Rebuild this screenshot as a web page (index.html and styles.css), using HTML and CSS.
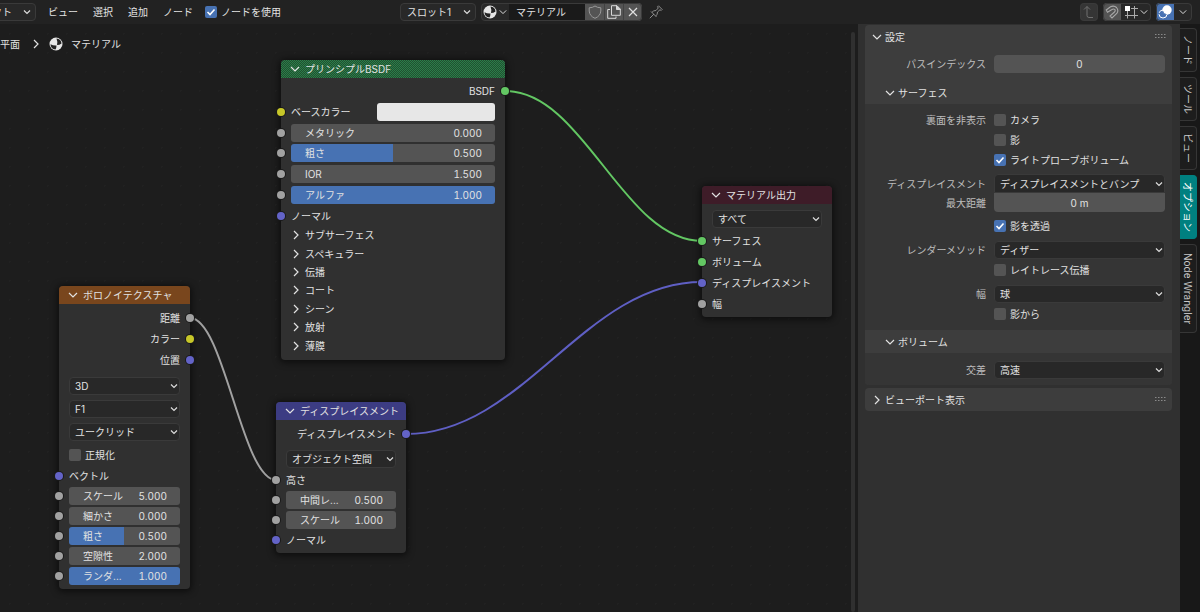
FILE: index.html
```
<!DOCTYPE html>
<html lang="ja">
<head>
    <meta charset="UTF-8">
    <meta name="viewport" content="width=device-width, initial-scale=1.0">
    <title>シェーダーエディター</title>
    <link rel="stylesheet" href="styles.css">
</head>
<body>

    <svg class="defs" aria-hidden="true">
        <symbol id="down" viewBox="0 0 10 10"><path d="M1 3l4 4 4-4" fill="none" stroke="currentColor" stroke-width="1.2"/></symbol>
        <symbol id="right" viewBox="0 0 10 10"><path d="M3 1l4 4-4 4" fill="none" stroke="currentColor" stroke-width="1.2"/></symbol>
        <symbol id="ball" viewBox="0 0 14 14">
            <circle cx="7" cy="7" r="6.5" fill="#e6e6e6"/>
            <path d="M7.500 1.500A5.500 5.500 0 0 1 12.500 6.500Q10.500 8 8 8Q8.800 4.500 7.500 1.500Z" fill="#222"/>
            <path d="M1.500 7.200Q4 8.600 7.500 8.400Q7.500 10.500 6.500 12.500A5.500 5.500 0 0 1 1.500 7.200Z" fill="#222"/>
        </symbol>
        <symbol id="grip" viewBox="0 0 11 5">
            <path d="M0 .5h11M0 3.500h11" stroke="#8a8a8a" stroke-width="1" stroke-dasharray="1.500 1.500"/>
        </symbol>
    </svg>

    <header class="topbar">
        <select class="drop mode" aria-label="シェーダータイプ"><option>オブジェクト</option></select>
        <nav class="menus">
            <button>ビュー</button>
            <button>選択</button>
            <button>追加</button>
            <button>ノード</button>
        </nav>
        <label class="check use-nodes"><input type="checkbox" checked>ノードを使用</label>

        <div class="slot-area">
            <select class="drop slot" aria-label="スロット"><option>スロット1</option></select>
            <div class="joined">
                <button class="browse" aria-label="マテリアルを閲覧"><svg width="14" height="14"><use href="#ball"/></svg><svg width="8" height="8"><use href="#down"/></svg></button>
                <input class="mat-name" type="text" value="マテリアル" aria-label="マテリアル名">
                <button class="lit" aria-label="フェイクユーザー">
                    <svg width="14" height="14" viewBox="0 0 14 14"><path d="M7 1Q9.500 2.800 12.800 2.800V6Q12.500 11 7 13.300Q1.500 11 1.200 6V2.800Q4.500 2.800 7 1Z" fill="none" stroke="#999"/></svg>
                </button>
                <button class="lit" aria-label="新規マテリアル">
                    <svg width="14" height="14" viewBox="0 0 14 14" fill="none" stroke="#d8d8d8"><path d="M3 4.500H.7V13.300H9V11.500"/><path d="M4.500.7H10L13.300 4V10.300H4.500Z"/><path d="M9.500.7V4.500H13.300Z" fill="#d8d8d8"/></svg>
                </button>
                <button class="lit" aria-label="リンク解除">
                    <svg width="10" height="10" viewBox="0 0 10 10" stroke="#e0e0e0" stroke-width="1.200"><path d="M1 1l8 8M9 1l-8 8"/></svg>
                </button>
            </div>
            <button class="pin" aria-label="ピン">
                <svg width="14" height="14" viewBox="0 0 14 14" fill="none" stroke="#8c8c8c"><path d="M.8 13.200L5 9M2 6.500L7.500 12M3 7.300Q4.500 5.300 7 5.500L9.300 3L8.500 1.800L9.500.8L13.200 4.500L12.200 5.500L11 4.700L8.500 7Q8.700 9.500 6.700 11"/></svg>
            </button>
        </div>

        <div class="right-tools">
            <div class="joined">
                <button class="dim" aria-label="親ノードツリー">
                    <svg width="14" height="14" viewBox="0 0 14 14" fill="none" stroke="#707070"><path d="M2 4.500L5 1.500L8 4.500M5 1.500V10.500Q5 12.500 7 12.500H11"/></svg>
                </button>
            </div>
            <div class="joined">
                <button class="lit" aria-label="スナップ">
                    <svg width="14" height="14" viewBox="0 0 14 14" fill="none" stroke="#a8a8a8" stroke-width="1.100"><path d="M1.200 5L5.500 1.800Q9 .2 11.500 2.500Q14 5.500 11.800 8.500L7 13L5 11L9.500 7Q10.800 5.500 9.700 4.400Q8.500 3.500 7 4.500L2.500 7.200Z"/></svg>
                </button>
                <button class="wide" aria-label="スナップ先">
                    <svg width="14" height="14" viewBox="0 0 14 14"><path d="M3.500 6V13.500M10.500 1V13.500M7 3.500H14M1 10.500H14" stroke="#aaa" fill="none"/><path d="M1 1h5v5H1z" fill="#fff"/></svg>
                    <svg width="8" height="8"><use href="#down"/></svg>
                </button>
            </div>
            <div class="joined">
                <button class="on" aria-label="オーバーレイ">
                    <svg width="14" height="14" viewBox="0 0 14 14"><circle cx="9" cy="5" r="4.700" fill="#fff"/><circle cx="5" cy="9" r="4" fill="none" stroke="#fff" stroke-dasharray="12 1.500"/><path d="M4.700 6Q5 9.500 8.500 9.500" fill="none" stroke="#4772b3"/></svg>
                </button>
                <button aria-label="オーバーレイ設定"><svg width="8" height="8"><use href="#down"/></svg></button>
            </div>
        </div>
    </header>

    <main class="editor">
        <section class="canvas">
            <div class="crumbs">
                <span>平面</span>
                <svg width="10" height="10"><use href="#right"/></svg>
                <svg width="14" height="14"><use href="#ball"/></svg>
                <span>マテリアル</span>
            </div>

            <svg class="wires" aria-hidden="true">
                <path class="w-green" d="M505 67C584 67 623 217 702 217"/>
                <path class="w-blue" d="M406 410C524 410 584 258 702 258"/>
                <path class="w-gray" d="M190 294C224 294 242 456 276 456"/>
            </svg>

            <article class="node principled">
                <h2 class="green"><svg width="10" height="10"><use href="#down"/></svg>プリンシプルBSDF</h2>
                <div class="inputs">
                    <div class="row out s-green">BSDF</div>
                    <div class="row in s-yellow"><label for="base">ベースカラー</label><button class="swatch" id="base" aria-label="ベースカラー"></button></div>
                    <div class="row in s-gray"><label class="field">メタリック<input value="0.000"></label></div>
                    <div class="row in s-gray"><label class="field fill" style="--fill: 50%">粗さ<input value="0.500"></label></div>
                    <div class="row in s-gray"><label class="field">IOR<input value="1.500"></label></div>
                    <div class="row in s-gray"><label class="field fill" style="--fill: 100%">アルファ<input value="1.000"></label></div>
                    <div class="row in s-blue">ノーマル</div>
                </div>
                <ul class="subs">
                    <li><svg width="10" height="10"><use href="#right"/></svg>サブサーフェス</li>
                    <li><svg width="10" height="10"><use href="#right"/></svg>スペキュラー</li>
                    <li><svg width="10" height="10"><use href="#right"/></svg>伝播</li>
                    <li><svg width="10" height="10"><use href="#right"/></svg>コート</li>
                    <li><svg width="10" height="10"><use href="#right"/></svg>シーン</li>
                    <li><svg width="10" height="10"><use href="#right"/></svg>放射</li>
                    <li><svg width="10" height="10"><use href="#right"/></svg>薄膜</li>
                </ul>
            </article>

            <article class="node output">
                <h2 class="red"><svg width="10" height="10"><use href="#down"/></svg>マテリアル出力</h2>
                <div class="row pick"><select class="drop" aria-label="ターゲット"><option>すべて</option></select></div>
                <div class="row in s-green">サーフェス</div>
                <div class="row in s-green">ボリューム</div>
                <div class="row in s-blue">ディスプレイスメント</div>
                <div class="row in s-gray">幅</div>
            </article>

            <article class="node voronoi">
                <h2 class="orange"><svg width="10" height="10"><use href="#down"/></svg>ボロノイテクスチャ</h2>
                <div class="outs">
                    <div class="row out s-gray">距離</div>
                    <div class="row out s-yellow">カラー</div>
                    <div class="row out s-blue">位置</div>
                </div>
                <div class="row pick"><select class="drop" aria-label="次元"><option>3D</option></select></div>
                <div class="row pick"><select class="drop" aria-label="特徴出力"><option>F1</option></select></div>
                <div class="row pick"><select class="drop" aria-label="距離計算"><option>ユークリッド</option></select></div>
                <div class="row pick"><label class="check"><input type="checkbox">正規化</label></div>
                <div class="row in s-blue">ベクトル</div>
                <div class="row in s-gray"><label class="field">スケール<input value="5.000"></label></div>
                <div class="row in s-gray"><label class="field">細かさ<input value="0.000"></label></div>
                <div class="row in s-gray"><label class="field fill" style="--fill: 50%">粗さ<input value="0.500"></label></div>
                <div class="row in s-gray"><label class="field">空隙性<input value="2.000"></label></div>
                <div class="row in s-gray"><label class="field fill" style="--fill: 100%">ランダ...<input value="1.000"></label></div>
            </article>

            <article class="node displace">
                <h2 class="blue"><svg width="10" height="10"><use href="#down"/></svg>ディスプレイスメント</h2>
                <div class="outs">
                    <div class="row out s-blue">ディスプレイスメント</div>
                </div>
                <div class="row pick"><select class="drop" aria-label="空間"><option>オブジェクト空間</option></select></div>
                <div class="row in s-gray">高さ</div>
                <div class="row in s-gray"><label class="field">中間レ...<input value="0.500"></label></div>
                <div class="row in s-gray"><label class="field">スケール<input value="1.000"></label></div>
                <div class="row in s-blue">ノーマル</div>
            </article>

            <div class="scrollbar"></div>
        </section>

        <aside class="sidebar">
            <section class="panel">
                <h3><svg width="10" height="10"><use href="#down"/></svg>設定<svg class="grip" width="11" height="5"><use href="#grip"/></svg></h3>
                <div class="prop pass"><label for="pass">パスインデックス</label><input class="num" id="pass" value="0"></div>
                <h4><svg width="10" height="10"><use href="#down"/></svg>サーフェス</h4>
                <div class="body">
                    <div class="group">
                        <div class="prop"><span>裏面を非表示</span><label class="check"><input type="checkbox">カメラ</label></div>
                        <div class="prop"><label class="check"><input type="checkbox">影</label></div>
                        <div class="prop"><label class="check"><input type="checkbox" checked>ライトプローブボリューム</label></div>
                    </div>
                    <div class="group stack">
                        <div class="prop"><label for="disp">ディスプレイスメント</label><select class="drop" id="disp"><option>ディスプレイスメントとバンプ</option></select></div>
                        <div class="prop"><label for="dist">最大距離</label><input class="num" id="dist" value="0 m"></div>
                    </div>
                    <div class="group">
                        <div class="prop"><label class="check"><input type="checkbox" checked>影を透過</label></div>
                    </div>
                    <div class="group">
                        <div class="prop"><label for="method">レンダーメソッド</label><select class="drop" id="method"><option>ディザー</option></select></div>
                        <div class="prop"><label class="check"><input type="checkbox">レイトレース伝播</label></div>
                    </div>
                    <div class="group">
                        <div class="prop"><label for="thick">幅</label><select class="drop" id="thick"><option>球</option></select></div>
                        <div class="prop"><label class="check"><input type="checkbox">影から</label></div>
                    </div>
                </div>
                <h4><svg width="10" height="10"><use href="#down"/></svg>ボリューム</h4>
                <div class="body">
                    <div class="prop"><label for="cross">交差</label><select class="drop" id="cross"><option>高速</option></select></div>
                </div>
            </section>
            <section class="panel">
                <h3><svg width="10" height="10"><use href="#right"/></svg>ビューポート表示<svg class="grip" width="11" height="5"><use href="#grip"/></svg></h3>
            </section>
        </aside>

        <nav class="tabs">
            <button>ノード</button>
            <button>ツール</button>
            <button>ビュー</button>
            <button class="active">オプション</button>
            <button class="addon">Node Wrangler</button>
        </nav>
    </main>

</body>
</html>
```
FILE: styles.css
```
* {
    box-sizing: border-box;
}

body {
    margin: 0;
    height: 100vh;
    display: flex;
    flex-direction: column;
    overflow: hidden;
    background: #1d1d1d;
    color: #e2e2e2;
    font-family: Inter, "Noto Sans CJK JP", sans-serif;
    font-size: 10px;
    line-height: 16px;
}

button, input, select {
    font: inherit;
    color: inherit;
    margin: 0;
    padding: 0;
    border: none;
    background: none;
}

svg {
    flex: none;
    display: block;
}

h2, h3, h4, ul {
    margin: 0;
    padding: 0;
    font-size: 10px;
    font-weight: 400;
    list-style: none;
}

.defs {
    position: absolute;
    width: 0;
    height: 0;
}

/* shared controls */
.drop {
    appearance: none;
    width: 100%;
    height: 18px;
    padding: 0 16px 0 5px;
    border: 1px solid #3a3a3a;
    border-radius: 4px;
    background: #282828 url("data:image/svg+xml,%3Csvg xmlns='http://www.w3.org/2000/svg' width='8' height='8' viewBox='0 0 8 8'%3E%3Cpath d='M1 2.500l3 3 3-3' fill='none' stroke='%23ddd' stroke-width='1.200'/%3E%3C/svg%3E") no-repeat right 1px center;
}

.check {
    display: flex;
    align-items: center;
    gap: 4px;
    white-space: nowrap;
}

.check input {
    appearance: none;
    width: 12px;
    height: 12px;
    border-radius: 2px;
    background: #545454;
}

.check input:checked {
    background: #4772b3 url("data:image/svg+xml,%3Csvg xmlns='http://www.w3.org/2000/svg' width='12' height='12' viewBox='0 0 12 12'%3E%3Cpath d='M2.500 6l2.500 2.500 4.500-5' fill='none' stroke='white' stroke-width='1.600'/%3E%3C/svg%3E") center no-repeat;
}

.field {
    flex: 1;
    min-width: 0;
    height: 18px;
    padding: 0 13px 0 14px;
    border-radius: 3px;
    background: #545454;
    display: flex;
    align-items: center;
    white-space: nowrap;
}

.field.fill {
    background: linear-gradient(to right, #4772b3 var(--fill), #545454 var(--fill));
}

.field input {
    flex: 1;
    width: 0;
    font-variant-numeric: tabular-nums;
    text-align: right;
}

.num {
    width: 100%;
    height: 18px;
    border-radius: 4px;
    background: #545454;
    text-align: center;
}

/* header */
.topbar {
    flex: none;
    height: 24px;
    padding-right: 8px;
    background: #222;
    display: flex;
    align-items: center;
    position: relative;
}

.topbar .drop {
    background-color: #282828;
    background-position: right 4px center;
}

.topbar .mode {
    flex: none;
    width: 92px;
    margin-left: -56px;
    padding-left: 7px;
}

.menus {
    display: flex;
    gap: 15px;
    margin-left: 12px;
}

.use-nodes {
    margin-left: 12px;
}

.slot-area {
    display: flex;
    align-items: center;
    gap: 5px;
    margin-left: 119px;
}

.topbar .slot {
    width: 76px;
    padding-left: 6px;
}

.joined {
    display: flex;
    height: 18px;
    border-radius: 4px;
    overflow: hidden;
    background: #282828;
    outline: 1px solid #3a3a3a;
    outline-offset: -1px;
}

.joined button {
    width: 19px;
    display: flex;
    align-items: center;
    justify-content: center;
}

.joined .browse {
    width: 28px;
    gap: 2px;
}

.right-tools .joined button {
    width: 18px;
}

.right-tools .joined .wide {
    width: 30px;
    gap: 2px;
}

.joined .lit {
    background: #545454;
}

.joined .lit + .lit {
    border-left: 1px solid #424242;
}

.joined .dim {
    background: #353535;
}

.joined .on {
    background: #4772b3;
}

.mat-name {
    width: 76px;
    padding-left: 7px;
    background: #1a1a1a;
}

.pin {
    margin-left: 2px;
}

.right-tools {
    display: flex;
    gap: 5px;
    margin-left: auto;
}

/* node canvas */
.editor {
    flex: 1;
    min-height: 0;
    display: flex;
}

.canvas {
    flex: 1;
    min-width: 0;
    position: relative;
    overflow: hidden;
    background: #1d1d1d radial-gradient(circle, #212121 1px, transparent 1px) 0 0 / 19px 19px;
}

.crumbs {
    display: flex;
    align-items: center;
    margin-top: 12px;
    gap: 8px;
}

.crumbs svg:first-of-type {
    margin-left: 3px;
}

.wires {
    position: absolute;
    left: 0;
    top: 0;
    width: 100%;
    height: 100%;
    fill: none;
    stroke-width: 2;
}

.w-green {
    stroke: #63c763;
}

.w-blue {
    stroke: #5f5fc4;
}

.w-gray {
    stroke: #a1a1a1;
}

.node {
    position: absolute;
    width: 130px;
    padding-bottom: 3px;
    border-radius: 4px;
    background: #303030;
    box-shadow: 0 1px 6px 2px rgba(0, 0, 0, 0.5);
}

.principled {
    left: 281px;
    top: 36px;
    width: 224px;
    padding-bottom: 5px;
}

.output {
    left: 702px;
    top: 162px;
}

.voronoi {
    left: 59px;
    top: 262px;
    width: 131px;
}

.displace {
    left: 276px;
    top: 378px;
}

.node h2 {
    height: 18px;
    padding-left: 9px;
    border-radius: 4px 4px 0 0;
    display: flex;
    align-items: center;
    gap: 5px;
    white-space: nowrap;
}

.green {
    background: repeating-conic-gradient(#2b7d4a 0 25%, #215030 0 50%) 0 0 / 2px 2px;
}

.red {
    background: #3e1c28;
}

.orange {
    background: #79461d;
}

.blue {
    background: #3c3c83;
}

.row {
    position: relative;
    height: 20px;
    padding: 0 10px;
    display: flex;
    align-items: center;
}

.outs {
    padding-top: 3px;
}

.output .row,
.outs .row {
    height: 21px;
}

.node .pick {
    height: 23px;
}

.output .pick,
.outs + .pick {
    margin-top: 3px;
}

.voronoi .outs {
    padding-bottom: 1px;
}

.out {
    justify-content: flex-end;
}

/* sockets sit on the node's edge */
.in::before,
.out::after {
    content: "";
    position: absolute;
    top: 50%;
    width: 8px;
    height: 8px;
    margin-top: -4px;
    border-radius: 50%;
    background: var(--socket);
    box-shadow: 0 0 0 1px #1a1a1a;
}

.in::before {
    left: -4px;
}

.out::after {
    right: -4px;
}

.s-green {
    --socket: #63c763;
}

.s-yellow {
    --socket: #c7c729;
}

.s-gray {
    --socket: #a1a1a1;
}

.s-blue {
    --socket: #6363c7;
}

.inputs {
    height: 148px;
    padding-top: 3px;
    display: grid;
    grid-auto-rows: 1fr;
}

.principled .row {
    height: auto;
}

.swatch {
    width: 118px;
    height: 18px;
    margin-left: auto;
    border-radius: 3px;
    background: #e7e7e7;
}

.subs {
    height: 129px;
    padding-left: 10px;
    display: grid;
    grid-auto-rows: 1fr;
}

.subs li {
    display: flex;
    align-items: center;
    gap: 4px;
}

.scrollbar {
    position: absolute;
    right: 3px;
    top: 8px;
    bottom: 0;
    width: 4px;
    border-radius: 2px;
    background: #303030;
}

/* sidebar */
.sidebar {
    flex: none;
    width: 322px;
    padding: 1px 8px 0 7px;
    background: #303030;
    display: flex;
    flex-direction: column;
    gap: 3px;
}

.panel {
    border-radius: 4px;
    overflow: hidden;
    background: #3d3d3d;
}

.panel h3,
.panel h4 {
    height: 23px;
    padding: 0 6px 0 7px;
    display: flex;
    align-items: center;
    gap: 3px;
}

.panel h4 {
    padding-left: 20px;
}

.grip {
    margin-left: auto;
}

.prop {
    height: 20px;
    padding-right: 7px;
    display: grid;
    grid-template-columns: 1fr 171px;
    column-gap: 8px;
    align-items: center;
}

.prop > :first-child:not(.check) {
    text-align: right;
    color: #bdbdbd;
}

.prop > .check {
    grid-column: 2;
}

.pass {
    margin: 6px 0 7px;
}

.body {
    padding: 6px 0;
    background: #353535;
    display: flex;
    flex-direction: column;
    gap: 4px;
}

.body:last-child {
    padding: 7px 0 5px;
}

.stack .prop {
    height: 19px;
}

.stack .drop,
.stack .num {
    height: 19px;
}

.stack .drop {
    border-radius: 4px 4px 0 0;
}

.stack .num {
    border-radius: 0 0 4px 4px;
}

/* region tabs */
.tabs {
    flex: none;
    width: 20px;
    padding: 4px 3px 0 0;
    background: #181818;
    display: flex;
    flex-direction: column;
    gap: 5px;
}

.tabs button {
    width: 17px;
    padding: 6px 0;
    border: 1px solid #363636;
    border-left: none;
    border-radius: 0 4px 4px 0;
    background: #1d1d1d;
    color: #c8c8c8;
    writing-mode: vertical-rl;
    text-orientation: sideways;
    line-height: 16px;
}

.tabs .active {
    border-color: #008080;
    background: #008080;
    color: #fff;
}

.tabs .addon {
    padding: 8px 0;
}
```
